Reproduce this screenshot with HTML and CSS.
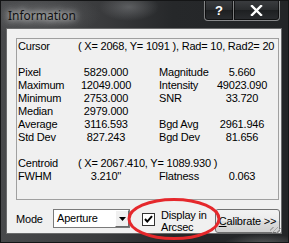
FILE: index.html
```html
<!DOCTYPE html>
<html lang="en">
<head>
    <meta charset="UTF-8">
    <title>Information</title>
    <link rel="stylesheet" href="styles.css">
</head>
<body>
    <div class="window">
        <div class="titlebar">
            <span class="title">Information</span>
            <div class="caption-buttons">
                <div class="cap-btn help">?</div>
                <div class="cap-btn close">
                    <svg width="13" height="11" viewBox="0 0 13 11">
                        <path d="M2 1 L11 10 M11 1 L2 10" stroke="#fff" stroke-width="2.4" stroke-linecap="square"/>
                    </svg>
                </div>
            </div>
        </div>

        <div class="client">
            <div class="info-panel">
                <span class="lbl">Cursor</span>
                <span class="wide">( X= 2068, Y= 1091 ), Rad= 10, Rad2= 20</span>
                <span class="blank"></span>

                <span class="lbl">Pixel</span><span class="val">5829.000</span>
                <span class="lbl2">Magnitude</span><span class="val">5.660</span>

                <span class="lbl">Maximum</span><span class="val">12049.000</span>
                <span class="lbl2">Intensity</span><span class="val">49023.090</span>

                <span class="lbl">Minimum</span><span class="val">2753.000</span>
                <span class="lbl2">SNR</span><span class="val">33.720</span>

                <span class="lbl">Median</span><span class="val">2979.000</span>
                <span class="lbl2"></span><span class="val"></span>

                <span class="lbl">Average</span><span class="val">3116.593</span>
                <span class="lbl2">Bgd Avg</span><span class="val">2961.946</span>

                <span class="lbl">Std Dev</span><span class="val">827.243</span>
                <span class="lbl2">Bgd Dev</span><span class="val">81.656</span>
                <span class="blank"></span>

                <span class="lbl">Centroid</span>
                <span class="wide">( X= 2067.410, Y= 1089.930 )</span>

                <span class="lbl">FWHM</span><span class="val">3.210''</span>
                <span class="lbl2">Flatness</span><span class="val">0.063</span>
            </div>

            <div class="controls">
                <span class="mode-label">Mode</span>
                <div class="combo">
                    <span class="combo-text">Aperture</span>
                    <span class="combo-btn">
                        <svg width="7" height="4" viewBox="0 0 7 4"><path d="M0 0 H7 L3.5 4 Z" fill="#000"/></svg>
                    </span>
                </div>
                <span class="check">
                    <svg width="11" height="11" viewBox="0 0 11 11">
                        <path d="M2 5 L4.3 7.6 L9 2.2" fill="none" stroke="#000" stroke-width="2"/>
                    </svg>
                </span>
                <span class="check-label">Display in<br>Arcsec</span>
                <button class="calibrate"><u>C</u>alibrate &gt;&gt;</button>
            </div>
            <span class="grip"></span>
        </div>

        <svg class="annotation" width="96" height="44" viewBox="0 0 96 44">
            <ellipse cx="48" cy="22" rx="45" ry="19.5" fill="none" stroke="#e5282c" stroke-width="3"/>
        </svg>
    </div>
</body>
</html>
```

FILE: styles.css
```css
* {
    box-sizing: border-box;
}
body {
    margin: 0;
    background: #202224;
    font-family: "Liberation Sans", Arial, sans-serif;
    font-size: 11px;
    color: #000;
}
.window {
    position: relative;
    width: 289px;
    height: 243px;
    overflow: hidden;
    display: flex;
    flex-direction: column;
    background:
        radial-gradient(ellipse 60px 22px at 40px 14px, rgba(110, 112, 114, 0.55), transparent),
        radial-gradient(ellipse 30px 14px at 128px 6px, rgba(120, 122, 125, 0.6), transparent),
        radial-gradient(ellipse 40px 10px at 262px 243px, rgba(140, 140, 140, 0.5), transparent),
        linear-gradient(90deg, #48494b 0%, #3a3b3d 35%, #26282a 60%, #232527 100%);
    border: 1px solid #141516;
}

/* title bar */
.titlebar {
    height: 27px;
    display: flex;
    align-items: flex-start;
}
.title {
    margin: 6px 0 0 7px;
    font-family: "Noto Sans", sans-serif;
    font-size: 12px;
    color: #111;
    text-shadow: 0 0 6px rgba(255, 255, 255, 0.9), 0 0 10px rgba(255, 255, 255, 0.7);
}
.caption-buttons {
    margin-left: auto;
    margin-right: 8px;
    margin-top: -1px;
    display: flex;
    height: 21px;
}
.cap-btn {
    height: 21px;
    display: flex;
    align-items: center;
    justify-content: center;
    border: 1px solid rgba(200, 200, 200, 0.55);
    border-top: none;
    background: linear-gradient(#3c3e41, #2a2c2e 50%, #1d1f21 51%, #2b2d30);
    box-shadow: inset 0 0 0 1px rgba(0, 0, 0, 0.6);
    color: #fff;
}
.help {
    width: 30px;
    border-radius: 0 0 0 4px;
    font-family: "Liberation Sans", sans-serif;
    font-weight: bold;
    font-size: 13px;
}
.close {
    width: 46px;
    border-left: none;
    border-radius: 0 0 4px 0;
}

/* client area */
.client {
    position: relative;
    flex: 1;
    margin: 0 6px 8px 5px;
    background: #f0f0f0;
    border: 1px solid #6a6b6c;
    display: flex;
    flex-direction: column;
}
.info-panel {
    height: 162px;
    margin: 9px 2px 0 9px;
    padding: 1px 0 0 1px;
    border: 1px solid #a0a0a0;
    display: grid;
    grid-template-columns: 62px 52px 84px 52px;
    grid-auto-rows: 13px;
    align-content: start;
    line-height: 13px;
    letter-spacing: -0.2px;
    white-space: nowrap;
}
.lbl2 {
    padding-left: 27px;
}
.val {
    text-align: center;
}
.wide {
    grid-column: 2 / span 3;
    margin-left: -2px;
}
.blank {
    grid-column: 1 / -1;
}

/* bottom controls */
.controls {
    flex: 1;
    display: flex;
    align-items: flex-start;
    padding-left: 9px;
    letter-spacing: -0.2px;
}
.mode-label {
    width: 37px;
    margin-top: 13px;
    line-height: 13px;
}
.combo {
    width: 77px;
    height: 19px;
    margin-top: 9px;
    display: flex;
    background: #fff;
    border: 1px solid #7a7a7a;
}
.combo-text {
    flex: 1;
    padding: 2px 0 0 3px;
    line-height: 13px;
}
.combo-btn {
    width: 14px;
    display: flex;
    align-items: center;
    justify-content: center;
    background: #f0f0f0;
    border: 1px solid;
    border-color: #fff #696969 #696969 #fff;
}
.check {
    width: 13px;
    height: 13px;
    margin: 13px 0 0 12px;
    display: flex;
    align-items: center;
    justify-content: center;
    background: #fff;
    border: 1px solid #333;
}
.check-label {
    margin: 9px 0 0 6px;
    line-height: 12px;
}
.calibrate {
    width: 65px;
    height: 24px;
    margin: 9px 1px 0 auto;
    padding: 0;
    font-family: "Liberation Sans", Arial, sans-serif;
    font-size: 11px;
    letter-spacing: -0.2px;
    color: #000;
    background: linear-gradient(#f2f2f2, #ebebeb 50%, #dddddd 51%, #cfcfcf);
    border: 1px solid #707070;
    border-radius: 3px;
}
.grip {
    position: absolute;
    right: 0;
    bottom: 0;
    width: 11px;
    height: 6px;
    background: repeating-linear-gradient(135deg, transparent 0 2px, #a8a8a8 2px 3px);
}

/* red annotation ring */
.annotation {
    position: absolute;
    left: 125px;
    top: 196px;
}
```
